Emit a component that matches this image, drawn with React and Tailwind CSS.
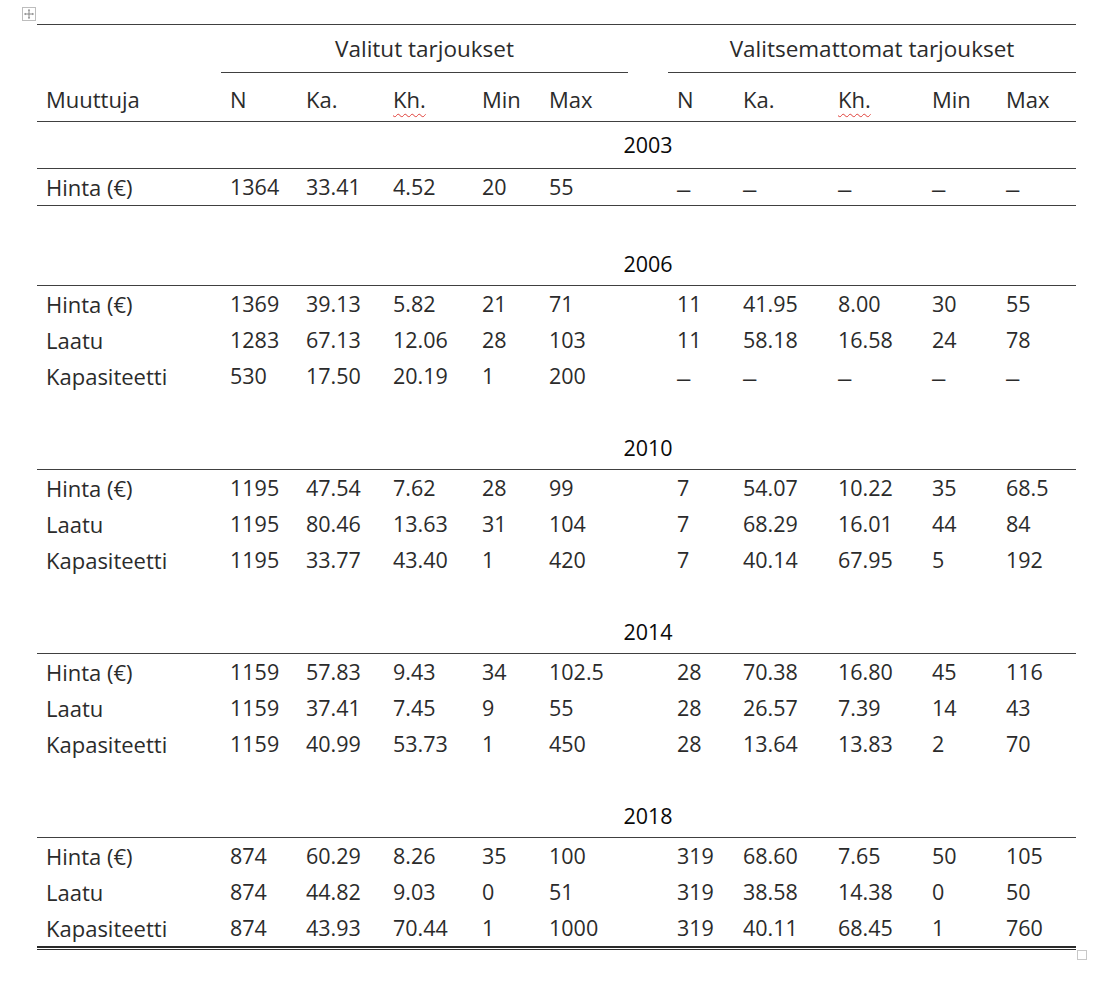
import React from "react";

const GRID =
  "grid grid-cols-[184px_76px_87px_89px_67px_88px_40px_66px_95px_94px_74px_79px]";

const BODY = "font-['Open_Sans',sans-serif] font-normal text-[21.5px] text-[#2b2b2b]";
const LABEL = "text-[22px]";
const YEAR = "font-['Open_Sans',sans-serif] font-normal text-[21.5px] text-[#0a0a0a]";

const blocks = [
  {
    year: "2003",
    rows: [["Hinta (€)", "1364", "33.41", "4.52", "20", "55", "–", "–", "–", "–", "–"]],
  },
  {
    year: "2006",
    rows: [
      ["Hinta (€)", "1369", "39.13", "5.82", "21", "71", "11", "41.95", "8.00", "30", "55"],
      ["Laatu", "1283", "67.13", "12.06", "28", "103", "11", "58.18", "16.58", "24", "78"],
      ["Kapasiteetti", "530", "17.50", "20.19", "1", "200", "–", "–", "–", "–", "–"],
    ],
  },
  {
    year: "2010",
    rows: [
      ["Hinta (€)", "1195", "47.54", "7.62", "28", "99", "7", "54.07", "10.22", "35", "68.5"],
      ["Laatu", "1195", "80.46", "13.63", "31", "104", "7", "68.29", "16.01", "44", "84"],
      ["Kapasiteetti", "1195", "33.77", "43.40", "1", "420", "7", "40.14", "67.95", "5", "192"],
    ],
  },
  {
    year: "2014",
    rows: [
      ["Hinta (€)", "1159", "57.83", "9.43", "34", "102.5", "28", "70.38", "16.80", "45", "116"],
      ["Laatu", "1159", "37.41", "7.45", "9", "55", "28", "26.57", "7.39", "14", "43"],
      ["Kapasiteetti", "1159", "40.99", "53.73", "1", "450", "28", "13.64", "13.83", "2", "70"],
    ],
  },
  {
    year: "2018",
    rows: [
      ["Hinta (€)", "874", "60.29", "8.26", "35", "100", "319", "68.60", "7.65", "50", "105"],
      ["Laatu", "874", "44.82", "9.03", "0", "51", "319", "38.58", "14.38", "0", "50"],
      ["Kapasiteetti", "874", "43.93", "70.44", "1", "1000", "319", "40.11", "68.45", "1", "760"],
    ],
  },
];

function Cell({ children, className = "" }) {
  return (
    <div className={`flex items-center pl-[9px] whitespace-nowrap ${className}`}>{children}</div>
  );
}

function Val({ v }) {
  if (v === "–") {
    return (
      <Cell>
        <span className="font-['Liberation_Sans',sans-serif] text-[24px] leading-none pt-[3px]">–</span>
      </Cell>
    );
  }
  return <Cell>{v}</Cell>;
}

function DataRow({ r, border, h = "h-[36px]" }) {
  const nums = r.slice(1, 6);
  const right = r.slice(6);
  return (
    <div className={`${GRID} ${h} ${BODY} ${border ? "border-b border-[#404040]" : ""}`}>
      <Cell className={LABEL}>{r[0]}</Cell>
      {nums.map((v, i) => (
        <Val key={i} v={v} />
      ))}
      <div />
      {right.map((v, i) => (
        <Val key={"r" + i} v={v} />
      ))}
    </div>
  );
}

function YearRow({ year, h }) {
  return (
    <div className={`${GRID} ${h} border-b border-[#404040]`}>
      <div className="col-span-6" />
      <div className={`flex items-center justify-center whitespace-nowrap ${YEAR}`}>{year}</div>
      <div className="col-span-5" />
    </div>
  );
}

function Kh() {
  return (
    <span className="underline decoration-wavy decoration-[#e0403a] decoration-[1px] underline-offset-[5px]">
      Kh.
    </span>
  );
}

export default function App() {
  return (
    <div className="relative w-[1105px] h-[982px] bg-white overflow-hidden">
      <div className="absolute left-[22px] top-[7px] w-[14px] h-[14px] border border-[#bdbdbd] bg-white flex items-center justify-center">
        <svg width="10" height="10" viewBox="0 0 10 10" fill="none">
          <path d="M5 0.5V9.5M0.5 5H9.5" stroke="#7a7a7a" strokeWidth="0.9" />
          <path d="M5 0.3L3.8 1.6H6.2Z M5 9.7L3.8 8.4H6.2Z M0.3 5L1.6 3.8V6.2Z M9.7 5L8.4 3.8V6.2Z" fill="#7a7a7a" />
        </svg>
      </div>

      <div className="pt-[24px] pl-[37px]">
        <div className="w-[1039px] border-t border-[#404040]">
          {/* group header */}
          <div className={`${GRID} h-[48px] ${BODY} text-[22.5px]`}>
            <div />
            <div className="col-span-5 flex items-center justify-center border-b border-[#404040]">
              Valitut tarjoukset
            </div>
            <div />
            <div className="col-span-5 flex items-center justify-center border-b border-[#404040]">
              Valitsemattomat tarjoukset
            </div>
          </div>
          {/* column header */}
          <div className={`${GRID} h-[49px] pt-[4px] border-b border-[#404040] ${BODY} ${LABEL}`}>
            <Cell>Muuttuja</Cell>
            <Cell>N</Cell>
            <Cell>Ka.</Cell>
            <Cell>
              <Kh />
            </Cell>
            <Cell>Min</Cell>
            <Cell>Max</Cell>
            <div />
            <Cell>N</Cell>
            <Cell>Ka.</Cell>
            <Cell>
              <Kh />
            </Cell>
            <Cell>Min</Cell>
            <Cell>Max</Cell>
          </div>

          {blocks.map((b, bi) => (
            <React.Fragment key={b.year}>
              {bi > 0 && <div className={bi === 1 ? "h-[40px]" : "h-[36px]"} />}
              <YearRow year={b.year} h={bi === 0 ? "h-[47px]" : "h-[40px] pb-[3px]"} />
              {b.rows.map((r, ri) => (
                <DataRow
                  key={ri}
                  r={r}
                  border={bi === 0}
                  h={bi === 0 ? "h-[37px]" : "h-[36px]"}
                />
              ))}
            </React.Fragment>
          ))}
          <div className="h-[4px] border-t-2 border-b border-[#2a2a2a]" />
        </div>
      </div>

      <div className="absolute left-[1077px] top-[950px] w-[10px] h-[10px] border border-[#c8c8c8] bg-white" />
    </div>
  );
}
